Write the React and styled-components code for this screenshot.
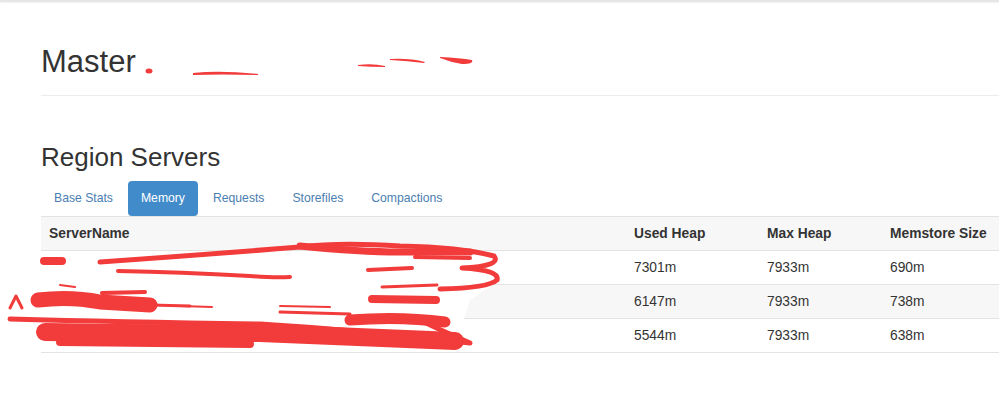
import React from 'react';
import styled, { createGlobalStyle } from 'styled-components';

const GlobalStyle = createGlobalStyle`
  html, body {
    margin: 0;
    padding: 0;
    background: #fff;
  }
  body {
    font-family: "Liberation Sans", Arial, sans-serif;
    color: #333;
  }
`;

const tabs = ['Base Stats', 'Memory', 'Requests', 'Storefiles', 'Compactions'];

const servers = [
  { used: '7301m', max: '7933m', memstore: '690m' },
  { used: '6147m', max: '7933m', memstore: '738m' },
  { used: '5544m', max: '7933m', memstore: '638m' },
];

// red marker scribbles hiding the host names
const Redaction = () => (
  <Scribble viewBox="0 0 999 420" width="999" height="420">
    <g fill="#f23b3b">
      <ellipse cx="149" cy="71" rx="3.5" ry="2.5" />
      <path d="M193 73 Q220 70 258 74 L258 75 Q220 74 193 75 Z" />
      <path d="M358 65 Q372 63 385 66 L385 67 Q370 67 358 66 Z" />
      <path d="M390 59 Q410 58 425 62 L424 63 Q408 61 390 60 Z" />
      <path d="M440 57 Q460 58 472 60 Q474 64 462 64 Q450 62 440 58 Z" />
    </g>
    <path
      d="M30 256 L495 252 L500 280 L470 300 L460 330 L60 338 L20 320 L30 290 Z"
      fill="#fff"
    />
    <g fill="none" stroke="#f23b3b" strokeLinecap="round" strokeLinejoin="round">
      <path d="M44 261 L62 261" strokeWidth="8" />
      <path d="M100 262 Q200 255 300 247 Q340 242 400 246 Q460 247 494 256 Q502 266 462 268 Q500 270 497 280 Q488 288 440 289" strokeWidth="5" />
      <path d="M300 246 Q360 252 400 252 Q450 252 470 252" strokeWidth="7" />
      <path d="M415 257 L470 258" strokeWidth="4" />
      <path d="M118 271 Q180 272 250 276 Q275 278 290 277" strokeWidth="4" />
      <path d="M368 270 L412 268" strokeWidth="4" />
      <path d="M382 287 L437 285" strokeWidth="3" />
      <path d="M372 299 L436 300" strokeWidth="8" />
      <path d="M102 293 L145 292" strokeWidth="4" />
      <path d="M60 285 L75 287" strokeWidth="2" />
      <path d="M10 308 L16 296 L22 308" strokeWidth="3" />
      <path d="M38 300 Q70 296 100 302 L150 305" strokeWidth="15" />
      <path d="M150 305 L190 306" strokeWidth="3" />
      <path d="M180 306 L212 307" strokeWidth="2" />
      <path d="M280 306 L330 307" strokeWidth="2" />
      <path d="M280 312 L350 314" strokeWidth="3" />
      <path d="M10 319 Q120 322 260 324 Q360 330 470 343 Q440 330 420 320" strokeWidth="5" />
      <path d="M45 332 Q150 334 260 333 Q360 337 455 341" strokeWidth="18" />
      <path d="M60 342 L250 344" strokeWidth="8" />
      <path d="M350 320 Q400 316 445 322" strokeWidth="11" />
    </g>
  </Scribble>
);

export default function App() {
  return (
    <>
      <GlobalStyle />
      <TopBar />
      <Page>
        <PageHeader>
          <Title>Master</Title>
        </PageHeader>
        <SubTitle>Region Servers</SubTitle>
        <TabList>
          {tabs.map((t) => (
            <Tab key={t} active={t === 'Memory'}>{t}</Tab>
          ))}
        </TabList>
        <Table>
          <HeadRow>
            <Cell>ServerName</Cell>
            <Cell>Used Heap</Cell>
            <Cell>Max Heap</Cell>
            <Cell>Memstore Size</Cell>
          </HeadRow>
          {servers.map((s, i) => (
            <Row key={i} striped={i % 2 === 1}>
              <Cell />
              <Cell>{s.used}</Cell>
              <Cell>{s.max}</Cell>
              <Cell>{s.memstore}</Cell>
            </Row>
          ))}
        </Table>
        <Redaction />
      </Page>
    </>
  );
}

const TopBar = styled.div`
  height: 2px;
  background: #e6e6e6;
  box-shadow: 0 1px 2px rgba(0, 0, 0, 0.06);
`;

const Page = styled.div`
  position: relative;
  height: 418px;
  padding-left: 41px;
  overflow: hidden;
`;

const PageHeader = styled.div`
  padding-top: 43px;
  padding-bottom: 16px;
  border-bottom: 1px solid #ececec;
`;

const Title = styled.h1`
  margin: 0;
  font-size: 31px;
  line-height: 34px;
  font-weight: 400;
  color: #333;
`;

const SubTitle = styled.h2`
  margin: 47px 0 9px;
  font-size: 26px;
  line-height: 29px;
  font-weight: 400;
  color: #333;
`;

const TabList = styled.div`
  display: flex;
  gap: 2px;
`;

const Tab = styled.div`
  padding: 0 13px;
  height: 35px;
  line-height: 35px;
  font-size: 12.2px;
  border-radius: 4px;
  color: ${(p) => (p.active ? '#fff' : '#4a7eb0')};
  background: ${(p) => (p.active ? '#428bca' : 'transparent')};
`;

const Table = styled.div`
  border-top: 1px solid #e3e3e3;
  font-size: 13.8px;
`;

const Row = styled.div`
  display: grid;
  grid-template-columns: 585px 133px 123px 1fr;
  height: 33px;
  border-bottom: 1px solid #e3e3e3;
  background: ${(p) => (p.striped ? '#f7f7f7' : '#fff')};
`;

const HeadRow = styled(Row)`
  background: #f7f7f7;
  font-weight: 700;
  color: #333;
`;

const Cell = styled.div`
  display: flex;
  align-items: center;
  padding-left: 8px;
  white-space: nowrap;
`;

const Scribble = styled.svg`
  position: absolute;
  top: -2px;
  left: 0;
  pointer-events: none;
`;
